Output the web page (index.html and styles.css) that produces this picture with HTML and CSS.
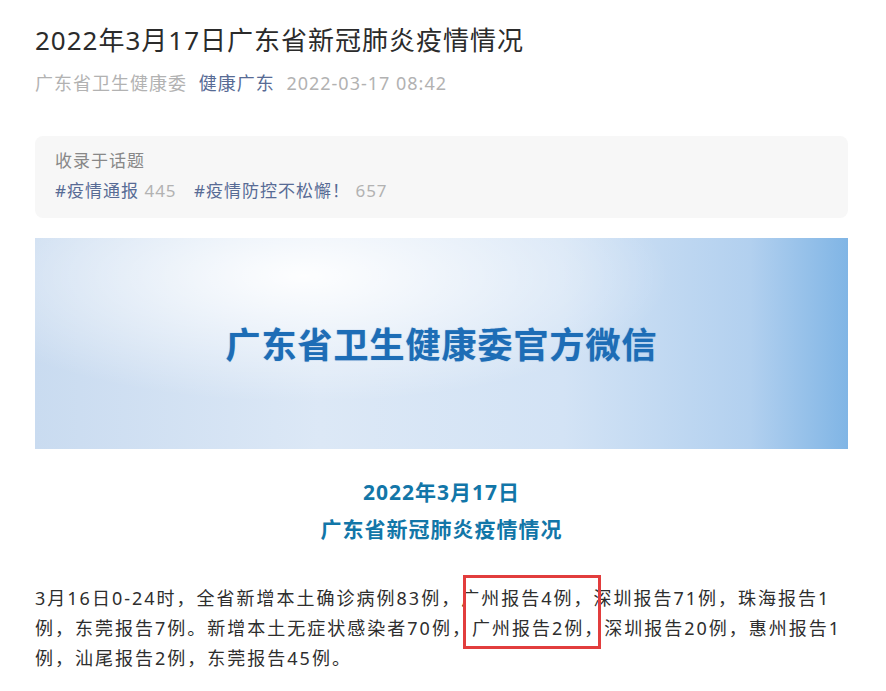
FILE: index.html
```html
<!DOCTYPE html>
<html lang="zh-CN">
<head>
    <meta charset="UTF-8">
    <meta name="viewport" content="width=device-width, initial-scale=1.0">
    <title>2022年3月17日广东省新冠肺炎疫情情况</title>
    <link rel="stylesheet" href="styles.css">
</head>
<body>
    <div class="article">
        <h1 class="title">2022年3月17日广东省新冠肺炎疫情情况</h1>

        <div class="meta">
            <span class="source">广东省卫生健康委</span>
            <span class="account">健康广东</span>
            <span class="date">2022-03-17 08:42</span>
        </div>

        <div class="topics">
            <div class="topics-label">收录于话题</div>
            <div class="topics-list">
                <span class="topic"><span class="tag">#疫情通报</span> <span class="count">445</span></span>
                <span class="topic"><span class="tag">#疫情防控不松懈！</span> <span class="count">657</span></span>
            </div>
        </div>

        <div class="banner">
            <span class="banner-text">广东省卫生健康委官方微信</span>
        </div>

        <div class="subhead">
            <p>2022年3月17日</p>
            <p>广东省新冠肺炎疫情情况</p>
        </div>

        <div class="body-text">
            <p>3月16日0-24时，全省新增本土确诊病例83例，广州报告4例，深圳报告71例，珠海报告1例，东莞报告7例。新增本土无症状感染者70例，广州报告2例，深圳报告20例，惠州报告1例，汕尾报告2例，东莞报告45例。</p>
            <div class="highlight"></div>
        </div>
    </div>
</body>
</html>
```

FILE: styles.css
```css
body {
    margin: 0;
    background: #fff;
    font-family: "Noto Sans", "Noto Sans CJK SC", sans-serif;
    color: #333;
}
.article {
    width: 813px;
    margin-left: 35px;
    padding-top: 22px;
}
.title {
    margin: 0;
    font-size: 26px;
    font-weight: normal;
    line-height: 36px;
    letter-spacing: 1px;
    color: #2b2b2b;
}
.meta {
    margin-top: 13px;
    font-size: 18px;
    line-height: 24px;
    letter-spacing: 1px;
    color: #b2b2b2;
}
.meta span {
    margin-right: 6px;
}
.meta .account {
    color: #576b95;
}
.topics {
    margin-top: 41px;
    background: #f7f7f7;
    border-radius: 8px;
    padding: 10px 20px 12px;
    font-size: 17px;
    line-height: 30px;
    letter-spacing: 1px;
}
.topics-label {
    color: #888;
}
.topic {
    margin-right: 12px;
}
.topic .tag {
    color: #576b95;
}
.topic .count {
    color: #b2b2b2;
}
.banner {
    margin-top: 20px;
    height: 211px;
    display: flex;
    align-items: center;
    justify-content: center;
    background:
        radial-gradient(ellipse 45% 60% at 33% 18%, rgba(255,255,255,0.95) 0%, rgba(255,255,255,0) 100%),
        linear-gradient(90deg, #c9dbf0 0%, #dce8f6 35%, #d3e3f5 65%, #b2d0ef 88%, #80b5e5 100%);
}
.banner-text {
    font-size: 35px;
    font-weight: 700;
    letter-spacing: 1px;
    color: #1d6db6;
    text-shadow: 0 0 1px rgba(29,109,182,0.6);
    margin-bottom: 2px;
}
.subhead {
    margin-top: 25px;
    text-align: center;
    color: #1276a8;
    font-size: 21px;
    font-weight: 700;
    letter-spacing: 1px;
    line-height: 37px;
}
.subhead p {
    margin: 0;
}
.body-text {
    position: relative;
    margin-top: 35px;
}
.body-text p {
    margin: 0;
    font-size: 18px;
    line-height: 30px;
    letter-spacing: 2px;
    color: #2e2e2e;
}
.highlight {
    position: absolute;
    left: 428px;
    top: -8px;
    width: 132px;
    height: 68px;
    border: 3px solid #e23d3d;
}
```
